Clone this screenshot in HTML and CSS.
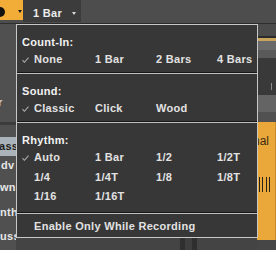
FILE: index.html
```html
<!DOCTYPE html>
<html>
<head>
<meta charset="utf-8">
<link rel="stylesheet" href="styles.css">
</head>
<body>
<div class="app">
  <div class="topbar">
    <div class="rec-btn"><span class="dot"></span><span class="caret caret-dark"></span></div>
    <div class="bar-select"><span class="bar-label">1 Bar</span><span class="caret caret-light"></span></div>
  </div>
  <div class="main">
    <div class="list">
      <div class="list-space"></div>
      <div class="list-frag"><span>r</span></div>
      <div class="list-gap"></div>
      <div class="list-row sel">ass</div>
      <div class="list-row r2">dv</div>
      <div class="list-row r3">wn</div>
      <div class="list-row r4">nth</div>
      <div class="list-row r4">uss</div>
    </div>
    <div class="center">
      <div class="center-fill"></div>
      <div class="center-foot">
        <span class="foot-a"></span><span class="foot-b"></span><span class="foot-a"></span>
      </div>
    </div>
    <div class="lane">
      <div class="b b1"></div>
      <div class="b b2"></div>
      <div class="b b3"></div>
      <div class="b b4"></div>
      <div class="b b5"></div>
      <div class="b b6"><span class="tick"></span></div>
      <div class="b b7"></div>
      <div class="b b8"></div>
      <div class="clip">
        <div class="clip-name">nal</div>
        <div class="clip-lines"><span></span><span></span><span></span><span></span></div>
      </div>
      <div class="b b9"></div>
    </div>
  </div>

  <div class="menu">
    <div class="sec sec-a">
      <div class="head">Count-In:</div>
      <div class="opts">
        <div class="opt on"><span class="check"><svg width="7" height="6" viewBox="0 0 7 6"><polyline points="0.5,3.2 2.4,5.3 6.5,0.6" fill="none" stroke="#a8a8a8" stroke-width="1.1"/></svg></span>None</div>
        <div class="opt">1 Bar</div>
        <div class="opt">2 Bars</div>
        <div class="opt">4 Bars</div>
      </div>
    </div>
    <div class="sep"></div>
    <div class="sec sec-a">
      <div class="head">Sound:</div>
      <div class="opts">
        <div class="opt on"><span class="check"><svg width="7" height="6" viewBox="0 0 7 6"><polyline points="0.5,3.2 2.4,5.3 6.5,0.6" fill="none" stroke="#a8a8a8" stroke-width="1.1"/></svg></span>Classic</div>
        <div class="opt">Click</div>
        <div class="opt">Wood</div>
      </div>
    </div>
    <div class="sep"></div>
    <div class="sec sec-b">
      <div class="head">Rhythm:</div>
      <div class="opts">
        <div class="opt on"><span class="check"><svg width="7" height="6" viewBox="0 0 7 6"><polyline points="0.5,3.2 2.4,5.3 6.5,0.6" fill="none" stroke="#a8a8a8" stroke-width="1.1"/></svg></span>Auto</div>
        <div class="opt">1 Bar</div>
        <div class="opt">1/2</div>
        <div class="opt">1/2T</div>
        <div class="opt">1/4</div>
        <div class="opt">1/4T</div>
        <div class="opt">1/8</div>
        <div class="opt">1/8T</div>
        <div class="opt">1/16</div>
        <div class="opt">1/16T</div>
      </div>
    </div>
    <div class="sep"></div>
    <div class="sec sec-c">
      <div class="opt">Enable Only While Recording</div>
    </div>
  </div>
</div>
<div class="page-foot"></div>
</body>
</html>
```

FILE: styles.css
```css
html, body {
  margin: 0;
  padding: 0;
  background: #ffffff;
}
body {
  width: 276px;
  height: 260px;
  overflow: hidden;
  font-family: "Liberation Sans", Arial, sans-serif;
  font-size: 11px;
  font-weight: bold;
  letter-spacing: 0.3px;
}
.app {
  position: relative;
  height: 250px;
  background: #4b4b4b;
  display: flex;
  flex-direction: column;
}

/* top bar */
.topbar {
  height: 24px;
  flex: none;
  display: flex;
  align-items: flex-start;
  background: #4d4d4d;
  box-shadow: inset 0 -1px 0 #2e2e2e;
}
.rec-btn {
  width: 23px;
  height: 20px;
  box-sizing: border-box;
  padding-top: 3px;
  background: #f2ac38;
  display: flex;
  align-items: center;
  overflow: hidden;
}
.dot {
  width: 10px;
  height: 10px;
  border-radius: 50%;
  background: #111;
  margin-left: -5px;
  flex: none;
}
.caret {
  width: 0;
  height: 0;
  border-left: 2.5px solid transparent;
  border-right: 2.5px solid transparent;
  flex: none;
}
.caret-dark {
  border-top: 3px solid #1c1c1c;
  margin-left: 13px;
}
.bar-select {
  width: 58px;
  height: 22px;
  box-sizing: border-box;
  padding: 4px 0 0 10px;
  background: #3c3c3c;
  display: flex;
  align-items: center;
}
.bar-label {
  color: #ececec;
  line-height: 13px;
}
.caret-light {
  border-top: 3px solid #d8d8d8;
  margin-left: 10px;
}

/* main background */
.main {
  flex: 1;
  display: flex;
}
.list {
  width: 16px;
  flex: none;
  overflow: hidden;
  display: flex;
  flex-direction: column;
  background: #505050;
  color: #e6e6e6;
  white-space: nowrap;
}
.list-space { height: 72px; flex: none; }
.list-frag {
  height: 12px;
  flex: none;
  line-height: 12px;
  color: #d6d6d6;
  margin-left: -2px;
}
.list-gap {
  height: 17px;
  flex: none;
  box-shadow: inset 0 -3px 0 #3c3c3c;
  margin-bottom: 12px;
}
.list-row {
  flex: none;
  height: 19px;
  line-height: 19px;
  padding-left: 0;
}
.list-row.sel {
  background: #a9b3b9;
  color: #1e1e1e;
  margin-left: -1px;
}
.list-row.r2 { height: 19px; padding-left: 1px; }
.list-row.r3 { height: 25px; line-height: 25px; }
.list-row.r4 { height: 24px; line-height: 24px; }

.center {
  flex: 1;
  display: flex;
  flex-direction: column;
  background: #474747;
}
.center-fill { flex: 1; }
.center-foot {
  height: 12px;
  flex: none;
  display: flex;
  padding-left: 164px;
  background: #444444;
}
.foot-a { width: 5px; background: #2f2f2f; }
.foot-b { width: 7px; background: #3e3e3e; }

.lane {
  width: 19px;
  flex: none;
  display: flex;
  flex-direction: column;
  overflow: hidden;
}
.b { flex: none; }
.b1 { height: 12px; background: #4b4b4b; }
.b2 { height: 2px; background: #2b2b2b; }
.b3 { height: 3px; background: #c9a45c; }
.b4 { height: 9px; background: #6a6a6a; }
.b5 { height: 8px; background: #595959; }
.b6 { height: 37px; background: #393939; display: flex; padding-left: 14px; box-sizing: border-box; }
.tick { width: 1px; height: 7px; margin-top: 25px; background: #8a8a8a; }
.b7 { height: 17px; background: #646464; }
.b8 { height: 10px; background: #515151; }
.clip {
  height: 118px;
  flex: none;
  background: #eaa83b;
  box-shadow: inset -7px 0 0 -6px #c98c28;
  display: flex;
  flex-direction: column;
}
.clip-name {
  margin-left: -4px;
  margin-top: 11px;
  line-height: 16px;
  font-weight: normal;
  color: #3a2b12;
  font-size: 12px;
  letter-spacing: 0;
}
.clip-lines {
  display: flex;
  gap: 2.3px;
  padding-left: 2px;
  margin-top: 28px;
  height: 15px;
}
.clip-lines span { width: 1px; background: #2a2418; }
.b9 { height: 10px; background: #464646; }

/* menu */
.menu {
  position: absolute;
  left: 16px;
  top: 24px;
  width: 242px;
  height: 214px;
  box-sizing: border-box;
  border: 1px solid #c8c8c8;
  background: #373737;
  box-shadow: 0 -1px 0 #2a2a2a;
  display: flex;
  flex-direction: column;
}
.sec { padding-left: 5px; }
.sec-a { padding-top: 9px; padding-bottom: 4px; }
.sec-b { padding-top: 9px; padding-bottom: 7px; }
.sec-c { padding-top: 4px; padding-bottom: 2px; }
.head {
  height: 17px;
  line-height: 17px;
  color: #f2f2f2;
}
.opts {
  display: grid;
  grid-template-columns: repeat(4, 61px);
  grid-auto-rows: 17px;
  row-gap: 2.5px;
}
.opt {
  display: flex;
  align-items: center;
  height: 17px;
  line-height: 17px;
  padding-left: 12px;
  color: #e2e2e2;
  white-space: nowrap;
}
.opt.on { padding-left: 0; }
.check {
  width: 12px;
  flex: none;
  display: flex;
  align-items: center;
}
.check svg { display: block; }
.sep {
  height: 2px;
  flex: none;
  box-sizing: border-box;
  border-top: 1px solid #161616;
  border-bottom: 1px solid #bfbfbf;
}

.page-foot {
  height: 10px;
  background: #ffffff;
}
```
